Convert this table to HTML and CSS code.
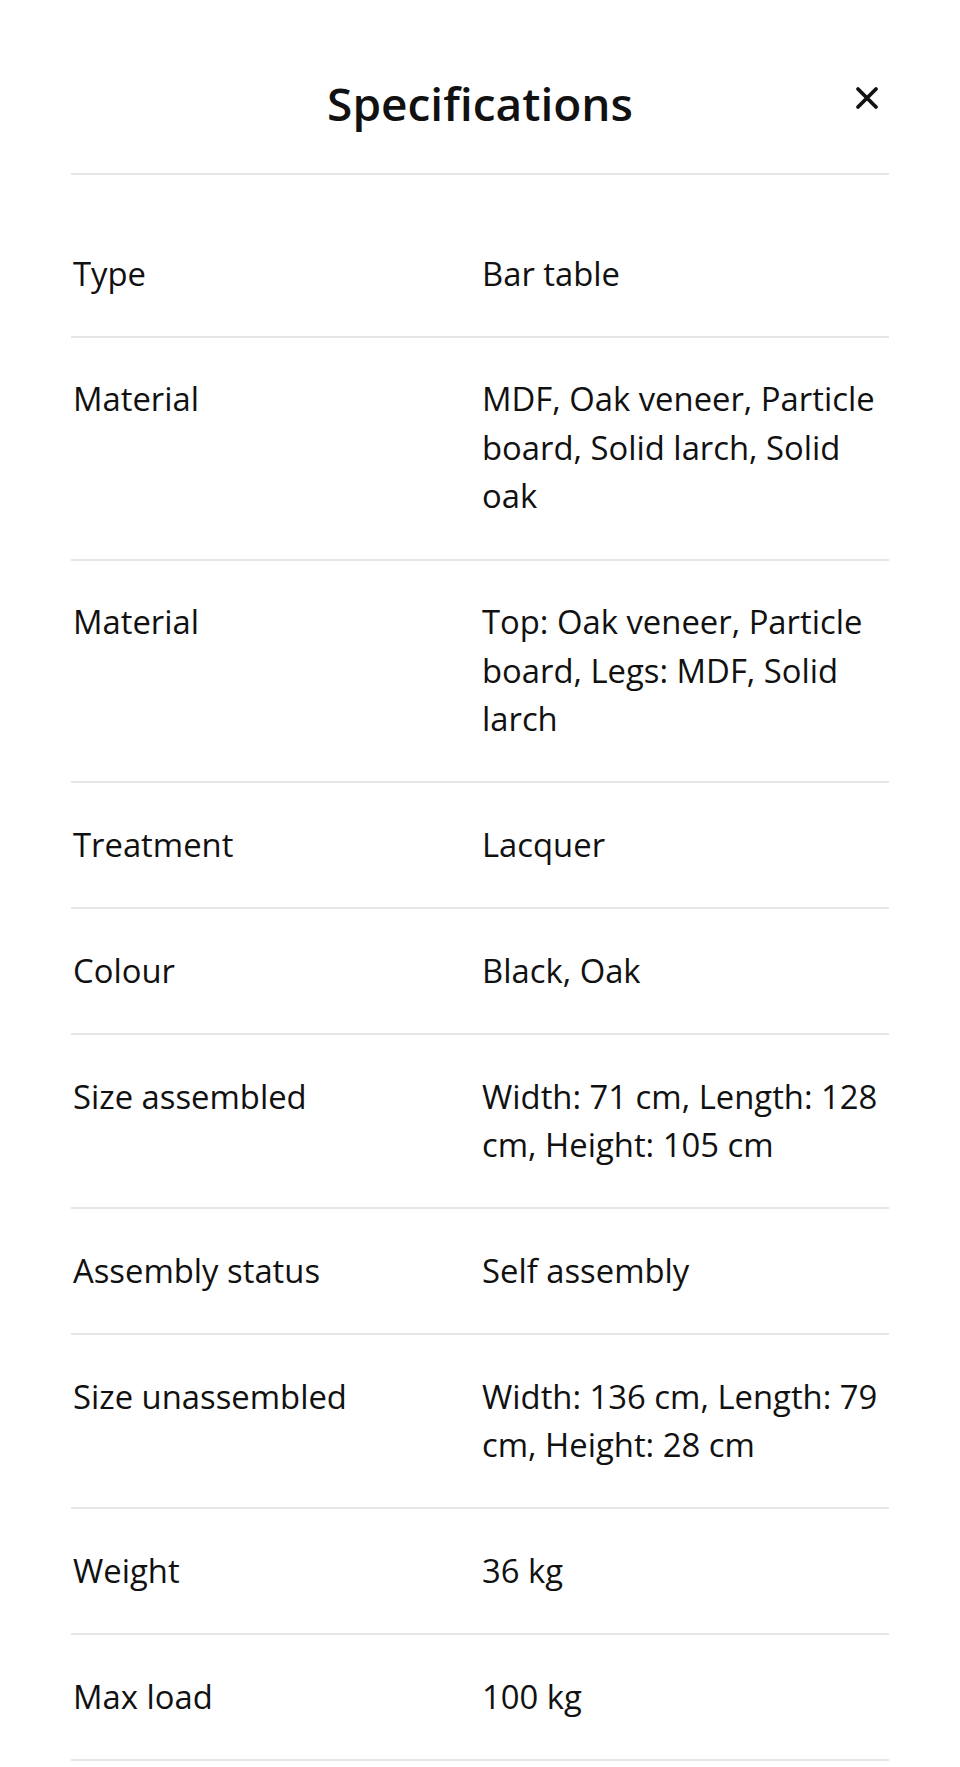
FILE: index.html
```html
<!DOCTYPE html>
<html lang="en">
<head>
<meta charset="utf-8">
<title>Specifications</title>
<link rel="stylesheet" href="styles.css">
</head>
<body>
<div class="sheet">
  <header class="sheet-header">
    <span class="spacer"></span>
    <h1 class="sheet-title">Specifications</h1>
    <button class="close-btn" aria-label="Close">
      <svg width="24" height="24" viewBox="0 0 24 24" aria-hidden="true"><path d="M3 3L21 21M21 3L3 21" stroke="#111" stroke-width="3.8" stroke-linecap="round" fill="none"/></svg>
    </button>
  </header>
  <dl class="spec-list">
    <div class="spec-row"><dt>Type</dt><dd>Bar table</dd></div>
    <div class="spec-row"><dt>Material</dt><dd>MDF, Oak veneer, Particle board, Solid larch, Solid oak</dd></div>
    <div class="spec-row"><dt>Material</dt><dd>Top: Oak veneer, Particle board, Legs: MDF, Solid larch</dd></div>
    <div class="spec-row"><dt>Treatment</dt><dd>Lacquer</dd></div>
    <div class="spec-row"><dt>Colour</dt><dd>Black, Oak</dd></div>
    <div class="spec-row"><dt>Size assembled</dt><dd>Width: 71 cm, Length: 128 cm, Height: 105 cm</dd></div>
    <div class="spec-row"><dt>Assembly status</dt><dd>Self assembly</dd></div>
    <div class="spec-row"><dt>Size unassembled</dt><dd>Width: 136 cm, Length: 79 cm, Height: 28 cm</dd></div>
    <div class="spec-row"><dt>Weight</dt><dd>36 kg</dd></div>
    <div class="spec-row"><dt>Max load</dt><dd>100 kg</dd></div>
  </dl>
</div>
</body>
</html>
```

FILE: styles.css
```css
html, body {
  margin: 0;
  padding: 0;
  background: #fff;
}
body {
  font-family: "Open Sans", "Noto Sans", sans-serif;
  color: #111;
}
.sheet {
  padding: 0 71px;
}
.sheet-header {
  display: grid;
  grid-template-columns: 44px 1fr 44px;
  align-items: center;
  height: 141px;
  padding-top: 32px;
  border-bottom: 2px solid #e6e6e6;
}
.sheet-title {
  margin: 0;
  text-align: center;
  font-size: 46px;
  font-weight: 600;
  line-height: 60px;
  color: #111;
}
.close-btn {
  width: 44px;
  height: 44px;
  margin-top: -10px;
  padding: 0;
  border: 0;
  background: none;
  display: flex;
  align-items: center;
  justify-content: center;
}
.spec-list {
  margin: 37px 0 0;
  padding: 0;
}
.spec-row {
  display: grid;
  grid-template-columns: 409px 1fr;
  padding: 37.7px 4px 37.6px 2px;
  border-bottom: 2px solid #e6e6e6;
  font-size: 32.8px;
  line-height: 48.5px;
}
.spec-row dt,
.spec-row dd {
  margin: 0;
}
```
